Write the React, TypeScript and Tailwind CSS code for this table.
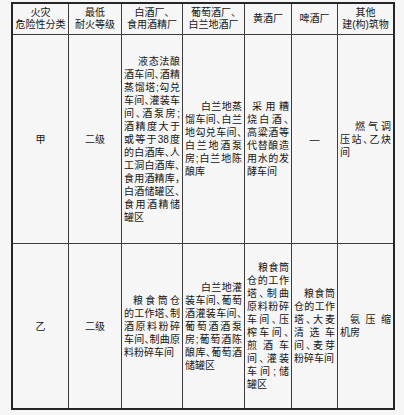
type Para = { lines: string[]; indent: string };
type Cell = string | Para;

const header: string[][] = [
  ["火灾", "危险性分类"],
  ["最低", "耐火等级"],
  ["白酒厂、", "食用酒精厂"],
  ["葡萄酒厂、", "白兰地酒厂"],
  ["黄酒厂"],
  ["啤酒厂"],
  ["其他", "建(构)筑物"],
];

const rows: Cell[][] = [
  [
    "甲",
    "二级",
    {
      indent: "pl-[14px]",
      lines: [
        "液态法酿",
        "酒车间、酒精",
        "蒸馏塔;勾兑",
        "车间、灌装车",
        "间、酒泵房;",
        "酒精度大于",
        "或等于38度",
        "的白酒库、人",
        "工洞白酒库、",
        "食用酒精库，",
        "白酒储罐区、",
        "食用酒精储",
        "罐区",
      ],
    },
    {
      indent: "pl-[16px]",
      lines: ["白兰地蒸", "馏车间、白兰", "地勾兑车间、", "白兰地酒泵", "房;白兰地陈", "酿库"],
    },
    {
      indent: "pl-[5px]",
      lines: ["采用糟", "烧白酒、", "高粱酒等", "代替酿造", "用水的发", "酵车间"],
    },
    "—",
    { indent: "pl-[15px]", lines: ["燃气调", "压站、乙炔", "间"] },
  ],
  [
    "乙",
    "二级",
    {
      indent: "pl-[9px]",
      lines: ["粮食筒仓", "的工作塔、制", "酒原料粉碎", "车间、制曲原", "料粉碎车间"],
    },
    {
      indent: "pl-[16px]",
      lines: [
        "白兰地灌",
        "装车间、葡萄",
        "酒灌装车间、",
        "葡萄酒酒泵",
        "房;葡萄酒陈",
        "酿库、葡萄酒",
        "储罐区",
      ],
    },
    {
      indent: "pl-[11px]",
      lines: [
        "粮食筒",
        "仓的工作",
        "塔、制曲",
        "原料粉碎",
        "车间、压",
        "榨车间、",
        "煎酒车",
        "间、灌装",
        "车间;储",
        "罐区",
      ],
    },
    {
      indent: "pl-[10px]",
      lines: ["粮食筒", "仓的工作", "塔、大麦", "清选车", "间、麦芽", "粉碎车间"],
    },
    { indent: "pl-[10px]", lines: ["氨压缩", "机房"] },
  ],
];

const BodyCell = ({ cell }: { cell: Cell }) => {
  if (typeof cell === "string") {
    return (
      <div className="flex items-center justify-center bg-[#f6f6f6] text-[10px] leading-[13px]">
        {cell}
      </div>
    );
  }
  return (
    <div className="flex items-center bg-[#f6f6f6]">
      <div className="w-full px-[2px] text-[10px] leading-[13px] [font-feature-settings:'halt']">
        {cell.lines.map((line, i) => {
          const last = i === cell.lines.length - 1;
          return (
            <div
              key={i}
              className={
                (last ? "text-left " : "text-justify [text-align-last:justify] ") +
                (i === 0 ? cell.indent : "")
              }
            >
              {line}
            </div>
          );
        })}
      </div>
    </div>
  );
};

export default function App() {
  return (
    <div
      className="h-[415px] w-[404px] overflow-hidden bg-[#f6f6f6] pt-[2px] pl-[11px] text-[#151515]"
      style={{ fontFamily: '"Liberation Sans", "Noto Sans CJK SC", sans-serif' }}
    >
      <div className="w-[384px] border-2 border-[#262626] bg-[#3c3c3c]">
        <div className="grid grid-cols-[55px_52px_60px_61px_46px_45px_55px] grid-rows-[30px_208px_164px] gap-px">
          {/* Header */}
          {header.map((h, i) => (
            <div
              key={i}
              className="flex flex-col items-center justify-center bg-[#f6f6f6] text-[10px] leading-[12px] [font-feature-settings:'halt']"
            >
              {h.map((t) => (
                <span key={t}>{t}</span>
              ))}
            </div>
          ))}

          {/* Body */}
          {rows.map((row, r) =>
            row.map((cell, c) => <BodyCell key={`${r}-${c}`} cell={cell} />)
          )}
        </div>
      </div>
    </div>
  );
}
